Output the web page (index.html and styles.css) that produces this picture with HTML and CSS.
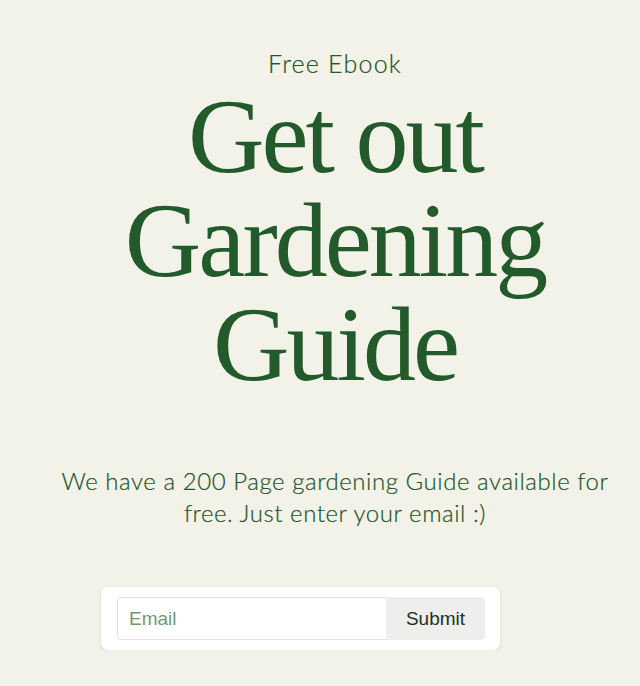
FILE: index.html
```html
<!DOCTYPE html>
<html>
<head>
<meta charset="utf-8">
<link rel="stylesheet" href="styles.css">
</head>
<body>
<main class="page">
  <section class="hero">
    <p class="eyebrow">Free Ebook</p>
    <h1 class="title">Get out<br>Gardening<br>Guide</h1>
    <p class="lead">We have a 200 Page gardening Guide available for free. Just enter your email :)</p>
  </section>
  <form class="signup" onsubmit="return false">
    <input class="signup-input" type="email" placeholder="Email">
    <button class="signup-btn" type="submit">Submit</button>
  </form>
</main>
</body>
</html>
```
FILE: styles.css
```css
html, body {
  margin: 0;
  padding: 0;
  background: #f3f2e8;
  overflow: hidden;
}
.page {
  width: 670px;
  padding-top: 48px;
}
.hero {
  text-align: center;
  color: #245a2b;
}
.eyebrow {
  margin: 0;
  font-family: Lato, "Open Sans", sans-serif;
  font-weight: 300;
  font-size: 25px;
  line-height: 30px;
  color: #1f5628;
  letter-spacing: 1.2px;
}
.title {
  margin: 7px 0 0;
  font-family: "Liberation Serif", "Times New Roman", serif;
  font-weight: 400;
  font-size: 106px;
  line-height: 104px;
  letter-spacing: -3px;
  color: #225a2b;
}
.lead {
  margin: 68px auto 0;
  width: 590px;
  font-family: Lato, "Open Sans", sans-serif;
  font-weight: 300;
  font-size: 24px;
  line-height: 32px;
  letter-spacing: 0.55px;
  color: #1f5628;
  -webkit-text-stroke: 0.2px #1f5628;
}
.eyebrow {
  -webkit-text-stroke: 0.2px #1f5628;
}
.signup {
  display: flex;
  margin: 58px 0 0 101px;
  width: 368px;
  padding: 10px 15px 10px 16px;
  background: #ffffff;
  border-radius: 7px;
  box-shadow: 0 1px 3px rgba(120, 120, 90, 0.25);
}
.signup-input {
  flex: 1;
  height: 43px;
  box-sizing: border-box;
  margin: 0;
  padding: 0 11px;
  border: 1px solid #e2e2df;
  border-right: none;
  border-radius: 4px 0 0 4px;
  font-family: "Liberation Sans", Arial, sans-serif;
  font-size: 19px;
  color: #2d6636;
  background: #fff;
  outline: none;
}
.signup-input::placeholder {
  color: #6f9a70;
}
.signup-btn {
  width: 99px;
  height: 43px;
  margin: 0;
  border: none;
  border-radius: 0 4px 4px 0;
  background: #eeeeec;
  font-family: "Liberation Sans", Arial, sans-serif;
  font-size: 19px;
  color: #1b3320;
}
```
